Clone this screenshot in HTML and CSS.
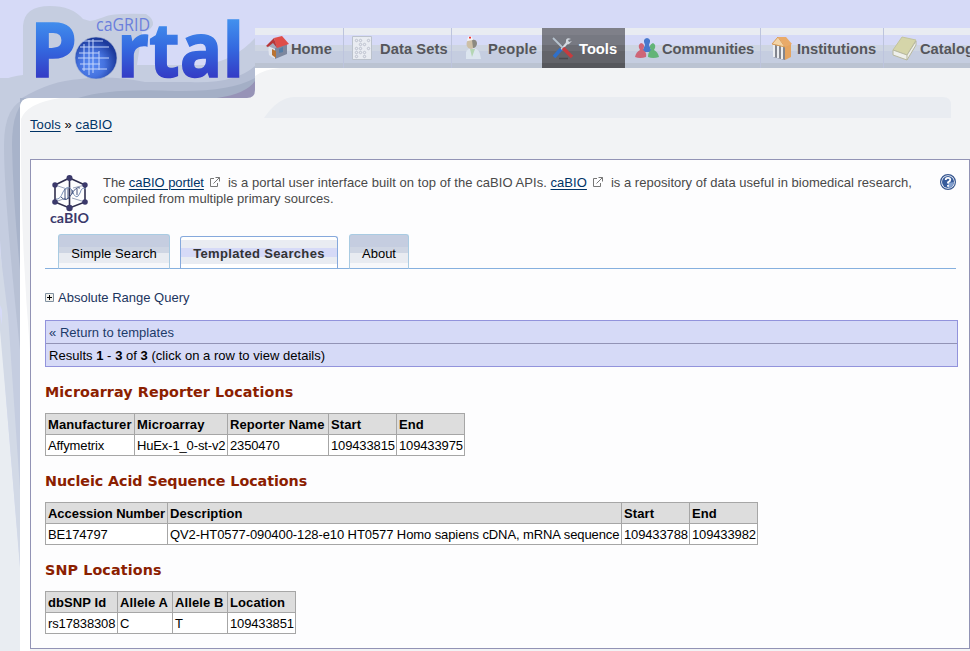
FILE: index.html
```
<!DOCTYPE html>
<html lang="en">
<head>
<meta charset="utf-8">
<title>caGRID Portal</title>
<link rel="stylesheet" href="styles.css">
</head>
<body>
<svg class="backdrop" viewBox="0 0 970 651" aria-hidden="true">
  <path fill="#c5cde0" d="M0 81Q12 76 23 75V26Q24 6 50 6Q72 6 83 19L90 21Q96 20 104 17Q112 13 146 14Q154 19 153 25Q150 31 142 32L137 65H205Q235 60 255 38V98H0Z"/>
  <path fill="#b4bdd3" d="M22 98Q50 81 80 79Q110 75 145 82H190Q235 84 255 66V98Z"/>
  <path fill="#a4afc6" d="M78 98Q110 88 175 91Q230 92 255 78V98Z"/>
  <path fill="#9793b7" d="M217 98Q246 94 255 81V98Z"/>
  <path fill="#c5cde0" d="M0 78H20V550L0 240Z"/>
  <path fill="#e9edf2" d="M0 315L7 410L20 565V651H0Z"/>
  <path fill="#d2d9e6" d="M0 250L8 315L20 490V568L7 410L0 330Z"/>
  <path fill="#d6daf7" d="M0 305L2 310V325L0 315Z"/>
  <path fill="#b8c1d5" d="M28 98Q4 104 4 145Q4 200 20 350V98Z"/>
  <path fill="#a8b3ca" d="M30 98Q12 105 12 145Q13 200 20 270V98Z"/>
  <path fill="#f2f3f5" d="M30 98H247Q255 98 255 90V68H970V651H20V108Q20 98 30 98Z"/>
  <path fill="#fff" d="M20 108Q20 98 31 98H60Q27 103 21 119Q20 230 30 350V651H20ZM255 68H280Q265 69 255 76Z"/>
  <path fill="#e9ecf1" d="M264 118Q278 97 295 97H943Q951 97 951 105V118Z"/>
</svg>
<header class="header">
  <a class="logo">
    <svg class="wordmark" width="255" height="98" viewBox="0 0 255 98">
      <defs>
        <linearGradient id="letters" gradientUnits="userSpaceOnUse" x1="0" y1="20" x2="0" y2="78">
          <stop offset="0" stop-color="#4290ee"/><stop offset=".5" stop-color="#3468df"/><stop offset="1" stop-color="#343bc5"/>
        </linearGradient>
        <radialGradient id="globe" cx=".4" cy=".65" r=".6">
          <stop offset="0" stop-color="#5a8df5"/><stop offset=".5" stop-color="#4572df"/><stop offset="1" stop-color="#1c3a9c"/>
        </radialGradient>
      </defs>
      <g class="logo-word" fill="url(#letters)" stroke="url(#letters)" stroke-width="1.500">
        <text x="30" y="76.500" textLength="47" lengthAdjust="spacingAndGlyphs">P</text>
        <text x="117" y="76.500" textLength="127" lengthAdjust="spacingAndGlyphs">rtal</text>
      </g>
      <circle cx="96" cy="58" r="21" fill="url(#globe)" stroke="#b4bdd3" stroke-width=".6"/>
      <path d="M83 41H103M80 47H109M79 53H99M78 58H109M80 64H100M82 69H107M84 44V71M89 40V75M93 39V73M99 51V70" fill="none" stroke="#c4d5fb" stroke-width="1"/>
      <text class="logo-small" x="96" y="31" textLength="54" lengthAdjust="spacingAndGlyphs">caGRID</text>
    </svg>
  </a>
  <nav class="nav">
    <a class="nav-item home">
      <svg width="24" height="26" viewBox="0 0 24 26"><path d="M2 11L9 24L22 18V9L14 4Z" fill="#a4aabc"/><path d="M3 11L10 14V24L4 20Z" fill="#e1e5ed"/><path d="M10 13L22 9V19L10 24Z" fill="#7d879e"/><path d="M9 3L17 1L24 9L12 13Z" fill="#df4d49"/><path d="M1 11L9 3L12 13L8 8L3 12Z" fill="#b73638"/><path d="M7 14L11 16V23L7 20Z" fill="#b97332"/><path d="M14 14L18 12V17L14 18Z" fill="#557da6"/></svg>
      <span>Home</span></a>
    <a class="nav-item data">
      <svg width="20" height="24" viewBox="0 0 20 24"><path d="M.5 .5H19.500V23.500H.5Z" fill="#e9ecf2" stroke="#bbc2cc"/><g fill="none" stroke="#bcc1ce"><circle cx="4.500" cy="4.500" r="1.200"/><circle cx="8.500" cy="4.500" r="1.200"/><circle cx="16.500" cy="4.500" r="1.200"/><circle cx="8.500" cy="8.500" r="1.200"/><circle cx="12.500" cy="8.500" r="1.200"/><circle cx="4.500" cy="12.500" r="1.200"/><circle cx="8.500" cy="12.500" r="1.200"/><circle cx="16.500" cy="12.500" r="1.200"/><circle cx="4.500" cy="16.500" r="1.200"/><circle cx="8.500" cy="16.500" r="1.200"/><circle cx="12.500" cy="16.500" r="1.200"/><circle cx="4.500" cy="20.500" r="1.200"/><circle cx="12.500" cy="20.500" r="1.200"/></g></svg>
      <span>Data Sets</span></a>
    <a class="nav-item people">
      <svg width="16" height="24" viewBox="0 0 16 24"><path d="M1 23V16Q3 12 8 12Q14 13 15 18L16 23Z" fill="#dce5ef"/><path d="M5 13L7 21L10 13Z" fill="#b4d6b4"/><ellipse cx="6" cy="8" rx="4.500" ry="5" fill="#cdbfa6"/><path d="M7 4Q12 3 12 8Q11 12 8 12Z" fill="#8b8980"/><path d="M2 5L3 1Q5 -1 7 1L8 4Z" fill="#f3f3f5"/><path d="M4 1.500H6M5 .5V3" stroke="#e33"/></svg>
      <span>People</span></a>
    <a class="nav-item tools active">
      <svg width="22" height="24" viewBox="0 0 22 24"><path d="M7 22.500H16" stroke="#4a4a4f" stroke-width="1.500"/><path d="M15 7L9 14" stroke="#d5dbe3" stroke-width="2"/><path d="M9 13L2 21" stroke="#2f6fc9" stroke-width="3.500"/><path d="M19 3Q14 1 14 5Q13 9 17 8L20 5L17 6L16 4Z" fill="#d2d8df"/><path d="M1 2L12 13" stroke="#b7c3cf" stroke-width="1.800"/><path d="M11 12L20 21" stroke="#c73b3e" stroke-width="3.500"/></svg>
      <span>Tools</span></a>
    <a class="nav-item communities">
      <svg width="24" height="21" viewBox="0 0 24 21"><path d="M7 14L10 7Q7 1 12 0Q17 1 14 7L17 14Z" fill="#4778cc"/><path d="M0 19Q1 14 5 12Q2 7 6 5Q11 6 8 12Q12 14 11 19Q5 21 0 19Z" fill="#ce6577"/><path d="M13 19Q13 14 16 12Q13 7 18 5Q22 7 19 12Q23 14 24 19Q18 21 13 19Z" fill="#63b477"/></svg>
      <span>Communities</span></a>
    <a class="nav-item institutions">
      <svg width="22" height="25" viewBox="0 0 22 25"><path d="M2 8L14 10V24L2 21Z" fill="#83868f"/><path d="M3 9V21M7 10V22M11 10V23" stroke="#eceef1" stroke-width="2"/><path d="M14 10L20 7V21L14 24Z" fill="#e5a460"/><path d="M1 8L7 1L14 11Z" fill="#f4d4a6" stroke="#d99d58"/><path d="M7 1L15 1L21 8L14 11Z" fill="#e9aa69"/></svg>
      <span>Institutions</span></a>
    <a class="nav-item catalogs">
      <svg width="25" height="25" viewBox="0 0 25 25"><path d="M10 1L24 4L15 19L1 14Z" fill="#d5d5a9" stroke="#c3c49d"/><path d="M1 14L15 19L24 5V9L15 24L1 19Z" fill="#eeefeb" stroke="#b7b89e"/><path d="M15 19V24" stroke="#b7b89e"/></svg>
      <span>Catalogs</span></a>
  </nav>
</header>
<main class="page">
  <div class="crumbs"><a class="link">Tools</a> » <a class="link">caBIO</a></div>
  <section class="portlet">
    <div class="intro">
      <svg class="cabio" width="40" height="50" viewBox="0 0 40 50">
        <g fill="none" stroke="#302f4e"><path d="M19.500 3L35 10V27L19.500 33L5 27V10ZM19.500 3V33" stroke-width="1.600"/><path d="M5 10L17 14M35 10L23 13M5 27L16 23M35 27L22 23" stroke="#9aa4ba"/><path d="M6 24Q10 25 13 17Q17 9 22 15Q26 27 30 18Q32 11 36 14" stroke="#7b91b7"/><path d="M11 22Q16 28 21 20Q26 11 30 13M15 14V24M18 13V24M22 15V19M27 14V20" stroke="#42537f"/></g>
        <g fill="#3b396b"><circle cx="19.500" cy="3" r="3"/><circle cx="5" cy="10" r="2.700"/><circle cx="35" cy="10" r="2.700"/><circle cx="5" cy="27" r="2.800"/><circle cx="35" cy="27" r="2.800"/><circle cx="19.500" cy="33" r="3.200"/></g>
        <text class="cabio-name" x="0" y="48" textLength="39" lengthAdjust="spacingAndGlyphs">caBIO</text>
      </svg>
      <p class="desc"><span class="line"><span class="d1">The <a class="link">caBIO portlet</a></span><svg class="ext" width="10" height="10" viewBox="0 0 10 10"><path d="M4 1.500H.5V9.500H7.500V6M5.500 .5H9.500V4.500M9.500 .5L3.500 6.500" fill="none" stroke="#777"/></svg><span class="d2">is a portal user interface built on top of the caBIO APIs. <a class="link">caBIO</a></span><svg class="ext" width="10" height="10" viewBox="0 0 10 10"><path d="M4 1.500H.5V9.500H7.500V6M5.500 .5H9.500V4.500M9.500 .5L3.500 6.500" fill="none" stroke="#777"/></svg><span class="d3">is a repository of data useful in biomedical research,</span></span><span class="line d4">compiled from multiple primary sources.</span></p>
      <svg class="help" width="16" height="16" viewBox="0 0 16 16"><circle cx="8" cy="8" r="7.400" fill="#fff" stroke="#36568f" stroke-width="1.200"/><circle cx="8" cy="8" r="6" fill="#365b9b"/><path d="M8 14Q13 14 14 8L8 9Z" fill="#829fce"/><path d="M5.700 6Q5.700 3.800 8 3.800Q10.300 3.800 10.300 5.800Q10.300 7.300 8 8.300V9.500M8 11V12.700" fill="none" stroke="#fff" stroke-width="1.800"/></svg>
    </div>
    <div class="tabs">
      <a class="tab simple"><span>Simple Search</span></a>
      <a class="tab current"><span>Templated Searches</span></a>
      <a class="tab about"><span>About</span></a>
    </div>
    <div class="toggle"><svg width="9" height="9" viewBox="0 0 9 9"><path d="M.5 .5H8.500V8.500H.5Z" fill="#f2f1ed" stroke="#8090a0"/><path d="M2 4.500H7M4.500 2V7" stroke="#000"/></svg><span>Absolute Range Query</span></div>
    <div class="results">
      <div class="results-row back"><a>« Return to templates</a></div>
      <div class="results-row count"><span>Results <b>1</b> - <b>3</b> of <b>3</b> (click on a row to view details)</span></div>
    </div>
    <h3 class="h-micro">Microarray Reporter Locations</h3>
    <table class="micro">
      <tr><th class="w89">Manufacturer</th><th class="w93">Microarray</th><th class="w101">Reporter Name</th><th class="w68">Start</th><th class="w68">End</th></tr>
      <tr><td>Affymetrix</td><td>HuEx-1_0-st-v2</td><td>2350470</td><td>109433815</td><td>109433975</td></tr>
    </table>
    <h3 class="h-nucleic">Nucleic Acid Sequence Locations</h3>
    <table class="nucleic">
      <tr><th class="w122">Accession Number</th><th class="w454">Description</th><th class="w68">Start</th><th class="w68">End</th></tr>
      <tr><td>BE174797</td><td class="sequence">QV2-HT0577-090400-128-e10 HT0577 Homo sapiens cDNA, mRNA sequence</td><td>109433788</td><td>109433982</td></tr>
    </table>
    <h3 class="h-snp">SNP Locations</h3>
    <table class="snp">
      <tr><th class="w72">dbSNP Id</th><th class="w55">Allele A</th><th class="w55">Allele B</th><th class="w68">Location</th></tr>
      <tr><td>rs17838308</td><td>C</td><td>T</td><td>109433851</td></tr>
    </table>
  </section>
</main>
</body>
</html>
```
FILE: styles.css
```
* { box-sizing: border-box; }
html { overflow: hidden; }
body { margin: 0; width: 970px; height: 651px; overflow: hidden; position: relative; background: #d6daf7; font: 13px/16px "Liberation Sans", Arial, sans-serif; color: #000; }
svg { display: block; flex: none; }
.backdrop { position: absolute; left: 0; top: 0; width: 970px; height: 651px; z-index: -1; }
.header { display: flex; height: 98px; }
.logo { flex: none; width: 255px; }
.wordmark { overflow: visible; }
.logo-word { font: bold 74.500px "Open Sans", sans-serif; }
.logo-small { font: 19px "Open Sans", sans-serif; fill: #6b7fdc; }
.nav { display: flex; flex: none; height: 40px; margin-top: 28px; background: linear-gradient(#e9ecf2 0 7px, #d6daf7 7px 17px, #ced5e2 17px 23px, #c5cde0 23px 35px, #bbc3d2 35px); }
.nav-item { display: flex; flex: none; align-items: center; height: 40px; border-right: 1px solid #bdc4dd; font-size: 14.700px; font-weight: bold; color: #55565c; white-space: nowrap; }
.nav-item span { padding-top: 2px; }
.home { width: 89px; padding-left: 10px; gap: 2px; }
.data { width: 108px; padding-left: 8px; gap: 8px; letter-spacing: .08px; }
.people { width: 90px; padding-left: 13px; gap: 7px; border-right: 0; letter-spacing: .15px; }
.tools { width: 83px; padding-left: 10px; gap: 5px; border-right: 0; }
.communities { width: 136px; padding-left: 10px; gap: 3px; letter-spacing: -.08px; }
.institutions { width: 123px; padding-left: 10px; gap: 4px; }
.catalogs { width: 120px; padding-left: 8px; gap: 3px; border-right: 0; }
.active { color: #fff; background: linear-gradient(#7f8089 0 7px, #777982 7px 17px, #6b6c73 17px 23px, #626369 23px 35px, #56575c 35px); }
.page { padding: 19px 0 0 30px; }
.crumbs { height: 42px; letter-spacing: .09px; }
.link { color: #003366; text-decoration: underline; text-underline-offset: 2px; }
.portlet { width: 940px; height: 490px; padding: 15px 11px 0 14px; border: 1px solid #9293b5; background: #fdfdfe; }
.intro { display: flex; height: 60px; padding-left: 5px; }
.cabio-name { font: bold 14px Lato, sans-serif; fill: #3b396b; }
.desc { margin: 0 0 0 13px; width: 837px; color: #494949; }
.line { display: flex; align-items: flex-start; white-space: pre; }
.d1 { letter-spacing: -.06px; }
.d2 { letter-spacing: .055px; }
.d3 { letter-spacing: .02px; }
.d4 { letter-spacing: .02px; }
.ext { margin: 2px 8px 0 6px; }
.help { margin-top: -1px; }
.tabs { display: flex; align-items: flex-end; gap: 10px; height: 34px; width: 911px; padding-left: 13px; border-bottom: 1px solid #86b0df; }
.tab { display: flex; justify-content: center; height: 35px; padding-top: 11px; margin-bottom: -1px; border: 1px solid #a9cbe2; border-bottom-color: #86b0df; border-radius: 3px 3px 0 0; background: linear-gradient(#c5cde0 0 12px, #ced5e3 12px 18px, #e8ebf1 18px 28px, #f6f7fa 28px); white-space: nowrap; }
.simple { width: 112px; letter-spacing: .08px; }
.current { width: 158px; height: 33px; padding-top: 9px; font-weight: bold; letter-spacing: .34px; color: #333; border-color: #86a9dc; border-bottom-color: #86b0df; background: linear-gradient(#fff 0 3px, #e9ecf2 3px 11px, #d6daf7 11px 20px, #e9ecf2 20px 27px, #fff 27px); }
.about { width: 60px; margin-left: 1px; }
.toggle { display: flex; align-items: center; gap: 4px; margin: 20px 0 0; height: 17px; color: #1c355e; }
.results { width: 913px; margin-top: 14px; border: 1px solid #9293dc; background: #d6daf7; }
.results-row { height: 23px; padding: 4px 3px 0; letter-spacing: .03px; }
.back { color: #1c3a69; border-bottom: 1px solid #9293b5; }
.count { height: 22px; }
h3 { margin: 15px 0 11px; height: 20px; font: bold 14.300px/20px "DejaVu Sans", Verdana, sans-serif; color: #8b2000; white-space: nowrap; }
.h-micro { letter-spacing: .1px; }
.h-nucleic { letter-spacing: -.06px; }
.h-snp { letter-spacing: .12px; }
table { border-collapse: collapse; table-layout: fixed; width: max-content; }
th, td { height: 21px; padding: 1px 2px 0; border: 1px solid #a6a6a6; text-align: left; white-space: nowrap; line-height: 16px; }
th { background: #ddd; letter-spacing: .1px; }
td { background: #fff; letter-spacing: -.14px; }
th.w122 { letter-spacing: -.05px; }
td.sequence { letter-spacing: -.09px; }
.micro { width: 420px; }
.nucleic { width: 713px; }
.snp { width: 251px; }
.w55 { width: 55px; } .w68 { width: 68px; } .w72 { width: 72px; } .w89 { width: 89px; }
.w93 { width: 93px; } .w101 { width: 101px; } .w122 { width: 122px; } .w454 { width: 454px; }
```
